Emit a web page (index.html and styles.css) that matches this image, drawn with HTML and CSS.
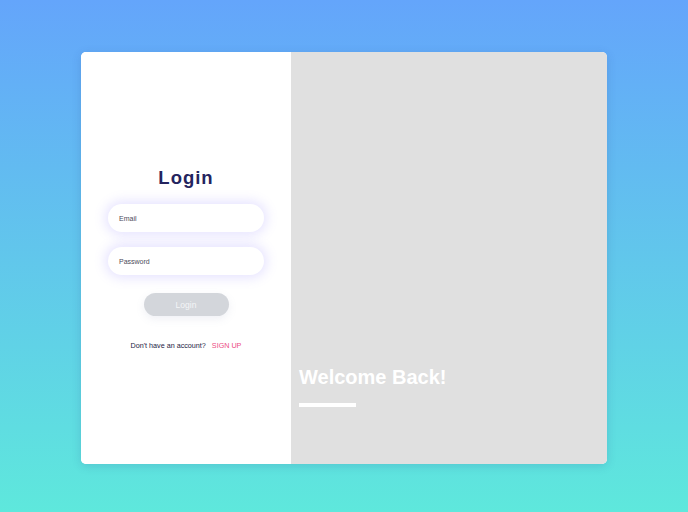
FILE: index.html
```html
<!DOCTYPE html>
<html lang="en">
<head>
<meta charset="utf-8">
<title>Login</title>
<link rel="stylesheet" href="styles.css">
</head>
<body>
<div class="stage">
  <div class="card">
    <div class="form-panel">
      <h1 class="title">Login</h1>
      <div class="field"><span class="placeholder">Email</span></div>
      <div class="field field-second"><span class="placeholder">Password</span></div>
      <button class="login-btn" type="button">Login</button>
      <p class="signup">Don't have an account? <a class="signup-link" href="#">SIGN UP</a></p>
    </div>
    <div class="image-panel">
      <h2 class="welcome">Welcome Back!</h2>
      <div class="welcome-bar"></div>
    </div>
  </div>
</div>
</body>
</html>
```
FILE: styles.css
```css
html, body {
  margin: 0;
  padding: 0;
}
body {
  width: 688px;
  height: 512px;
  background: linear-gradient(180deg, #64a5fb 0%, #5ee8dc 100%);
  font-family: "Liberation Sans", Arial, sans-serif;
  overflow: hidden;
}
.stage {
  height: 512px;
  display: flex;
  justify-content: flex-start;
  align-items: flex-start;
  padding: 52px 0 0 81px;
  box-sizing: border-box;
}
.card {
  width: 526px;
  height: 412px;
  display: flex;
  border-radius: 5px;
  overflow: hidden;
  background: #fff;
  box-shadow: 0 2px 10px rgba(40, 70, 140, 0.18);
}
.form-panel {
  width: 210px;
  flex: none;
  display: flex;
  flex-direction: column;
  align-items: center;
  justify-content: center;
  background: #fff;
}
.title {
  margin: 2px 0 0;
  font-size: 18.5px;
  line-height: 22px;
  font-weight: 700;
  letter-spacing: 1px;
  color: #24245e;
}
.field {
  width: 156px;
  height: 28px;
  margin-top: 15px;
  box-sizing: border-box;
  border-radius: 14px;
  background: #fff;
  box-shadow: 0 0 12px 3px rgba(128, 116, 255, 0.2);
  display: flex;
  align-items: center;
  padding-left: 11px;
}
.field-second {
  margin-top: 15px;
}
.placeholder {
  font-size: 7px;
  color: #4b4b5a;
}
.login-btn {
  margin-top: 18px;
  width: 85px;
  height: 23px;
  border: none;
  border-radius: 12px;
  background: #d3d6db;
  color: #f4f5f7;
  font-family: "Liberation Sans", Arial, sans-serif;
  font-size: 8.5px;
  box-shadow: 0 3px 8px rgba(120, 130, 170, 0.12);
  padding: 0;
}
.signup {
  margin: 25px 0 0;
  font-size: 7.2px;
  line-height: 10px;
  color: #1c1c44;
}
.signup-link {
  margin-left: 4px;
  color: #ec4d83;
  text-decoration: none;
}
.image-panel {
  flex: 1;
  background: #e0e0e0;
  display: flex;
  flex-direction: column;
  justify-content: flex-end;
  padding: 0 0 57px 8px;
}
.welcome {
  margin: 0;
  font-size: 20px;
  line-height: 23px;
  font-weight: 700;
  color: #ffffff;
}
.welcome-bar {
  margin-top: 14px;
  width: 57px;
  height: 4px;
  background: #ffffff;
}
```
